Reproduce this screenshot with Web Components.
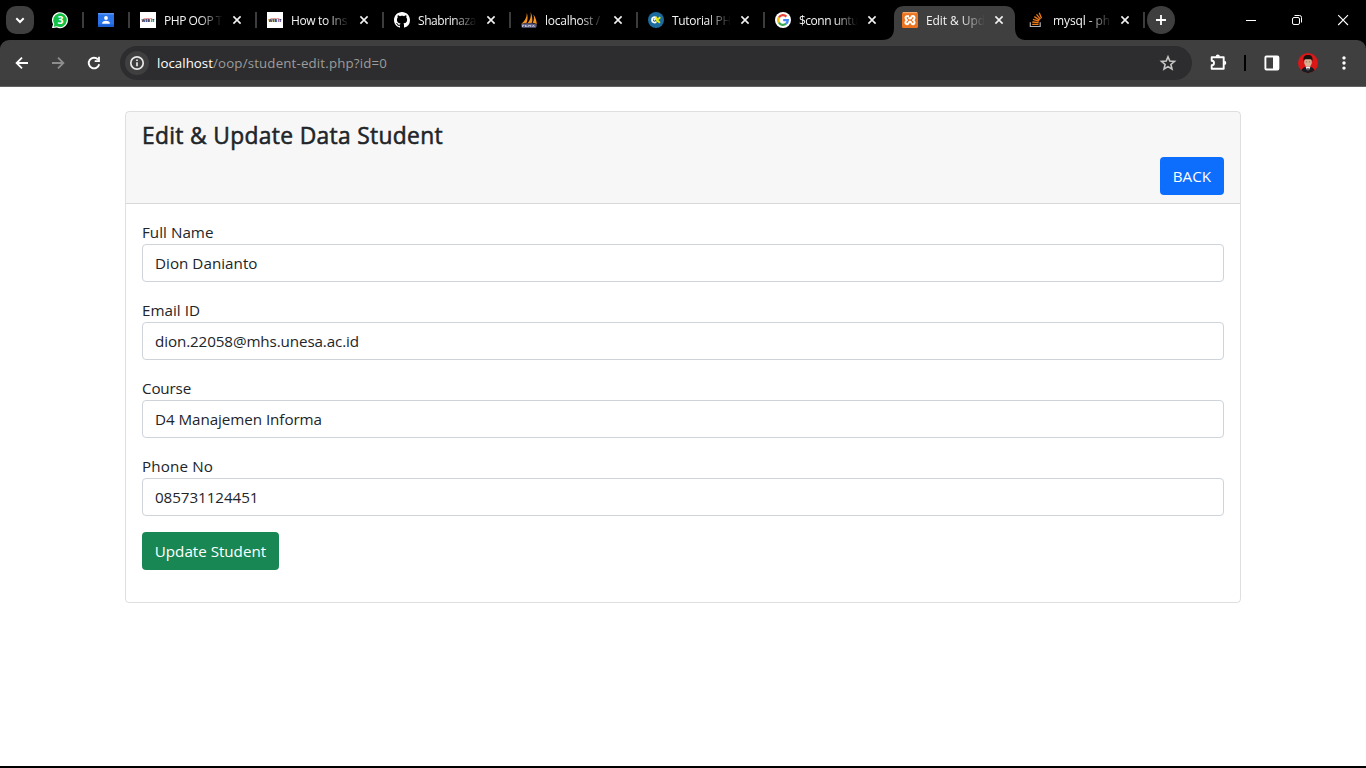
<!DOCTYPE html>
<html lang="en">
<head>
<meta charset="utf-8">
<title>Edit &amp; Update Data Student</title>
<style>
html,body{margin:0;height:100%;overflow:hidden;background:#fff}
body{font-family:"Open Sans","Noto Sans",sans-serif}
</style>
</head>
<body>
<browser-window>
  <tab-strip slot="tabs"></tab-strip>
  <tool-bar slot="toolbar"></tool-bar>
  <student-card>
    <fit-text slot="title" w="301">Edit &amp; Update Data Student</fit-text>
    <action-button slot="action" color="#0d6efd"><fit-text w="38.5">BACK</fit-text></action-button>
    <form-field label="Full Name" lw="71.500" value="Dion Danianto" vw="102.5"></form-field>
    <form-field label="Email ID" lw="58" value="dion.22058@mhs.unesa.ac.id" vw="204"></form-field>
    <form-field label="Course" lw="49" value="D4 Manajemen Informa" vw="167"></form-field>
    <form-field label="Phone No" lw="71" value="085731124451" vw="103.5"></form-field>
    <action-button color="#198754"><fit-text w="111.3">Update Student</fit-text></action-button>
  </student-card>
</browser-window>
<script>
const ICONS = {
  chevron: '<path d="M6.3 6.3 10 10l3.700-3.700" transform="translate(0 2)" fill="none" stroke="#fff" stroke-width="2"/>',
  whatsapp: '<path d="M2.700 17.500 3.700 14.100A7.400 7.400 0 1 1 6.700 16.800Z" fill="#12c143" stroke="#fff" stroke-width="1.200" stroke-linejoin="round"/><text x="10.400" y="13.800" text-anchor="middle" font-family="Open Sans" font-weight="700" font-size="10.500" fill="#fff">3</text>',
  contacts: '<rect x="2" y="3" width="16" height="14" rx="1.200" fill="#2a73e8"/><path d="M2 14.500h16V16a1 1 0 0 1-1 1H3a1 1 0 0 1-1-1Z" fill="#1a5fd0"/><rect x="2" y="3" width="16" height="1.500" rx=".7" fill="#5a97f5"/><circle cx="10" cy="8" r="1.900" fill="#fff"/><path d="M6.200 13.800v-1c0-1.400 2.500-2.100 3.800-2.100s3.800.7 3.800 2.100v1Z" fill="#fff"/>',
  webit: '<rect x="2" y="2" width="16" height="16" fill="#fff"/><text x="10" y="8.800" text-anchor="middle" font-family="Open Sans" font-weight="700" font-size="2.400" fill="#e0555c" textLength="9">FUNDA OF</text><text x="10" y="11.900" text-anchor="middle" font-family="Open Sans" font-weight="800" font-size="3.700" fill="#1c2340" textLength="13" lengthAdjust="spacingAndGlyphs">WEB IT</text>',
  github: '<path transform="translate(2 2)" fill="#fff" d="M8 0C3.580 0 0 3.580 0 8c0 3.540 2.290 6.530 5.470 7.590.4.070.55-.17.55-.38 0-.19-.01-.82-.01-1.490-2.010.37-2.530-.49-2.690-.94-.09-.23-.48-.94-.82-1.130-.28-.15-.68-.52-.01-.53.63-.01 1.080.58 1.230.82.72 1.210 1.870.87 2.330.66.070-.52.28-.87.51-1.070-1.780-.2-3.640-.89-3.640-3.950 0-.87.31-1.590.82-2.150-.08-.2-.36-1.020.08-2.120 0 0 .67-.21 2.200.82.64-.18 1.320-.27 2-.27s1.360.09 2 .27c1.530-1.040 2.200-.82 2.200-.82.44 1.100.16 1.920.08 2.120.51.56.82 1.270.82 2.150 0 3.070-1.870 3.750-3.650 3.950.29.25.54.73.54 1.480 0 1.070-.01 1.930-.01 2.200 0 .21.15.46.55.38A8.010 8.010 0 0 0 16 8c0-4.420-3.580-8-8-8Z"/>',
  pma: '<path d="M7.800 3C8 7 6 11 2.300 14l5.400-1.200C9 9 8.800 5.500 7.800 3ZM11.500 2c1 4-.2 8-3 11.200l4.600-.5c.6-3.700.1-7.500-1.600-10.700ZM14.400 4.500c.9 3 .7 5.500-.6 8.300l4 1.200c-.2-3.500-1.400-7-3.400-9.500Z" fill="#f59324"/><path d="M2.200 14.200c4-1.300 10.500-1.500 15.800.3l-1 3.300H2.800Z" fill="#5d5f86"/><path d="M3.500 17v-1.800h1.300v1M6.500 15v2M6.500 16h1.600v1M9.700 17v-2l1 1 1-1v2M13.500 17l.9-2 1 2" stroke="#d0d1e0" stroke-width=".8" fill="none"/>',
  tutorial: '<circle cx="10" cy="10" r="8" fill="#1d6b9d"/><path d="M10.300 12c-1.900 1.200-4.300.2-4.300-2s2-3.400 3.600-2.600M8 10.300l2.600-3.200" fill="none" stroke="#fff" stroke-width="1.800"/><path d="M10 6.800l1.400 5.200M14.300 7.200 11 10l2.900 2.900" fill="none" stroke="#e8ec1c" stroke-width="1.800"/>',
  google: '<circle cx="10" cy="10" r="8" fill="#fff"/><g fill="none" stroke-width="2.300"><path d="M13.400 6.600A4.800 4.800 0 0 0 5.900 7.500" stroke="#ea4335"/><path d="M5.900 7.500a4.800 4.800 0 0 0 0 5" stroke="#fbbc05"/><path d="M5.900 12.500a4.800 4.800 0 0 0 7.200 1.200" stroke="#34a853"/><path d="M10.200 10.200h4.600a4.800 4.800 0 0 1-1.700 3.500" stroke="#4285f4"/></g>',
  xampp: '<rect x="2" y="2" width="16" height="16" rx="1.500" fill="#ec7320"/><path d="M3 2.700h14" stroke="#f7b27b"/><path d="M9 6.300H6.800a1.500 1.500 0 0 0-1.300 1.500q0 1.600 1.500 2.300-1.500.7-1.500 2.300a1.600 1.600 0 0 0 3.200.3Q10 10.500 11.300 12.700a1.600 1.600 0 0 0 3.200-.3q0-1.600-1.500-2.300 1.500-.7 1.500-2.300a1.600 1.600 0 0 0-3.200-.3Q10 9.700 8.700 7.500" fill="none" stroke="#fff" stroke-width="2" stroke-linejoin="round"/>',
  stack: '<path d="M3.300 12.300v4.200h9.900v-4.200" fill="none" stroke="#aeb2b7" stroke-width="1.200"/><g stroke="#f07c18" stroke-width="1.300"><path d="M5.200 14.400h6.300M5.300 12l6.300.7M5.900 9.300l6 1.900M7.300 6.600l5.300 3.500M9.500 4.300l4 4.900M12.200 2.700l2.300 5.500"/></g>',
  close: '<path d="m6.400 6.400 7.200 7.200M13.600 6.400l-7.200 7.200" stroke="#f2f2f2" stroke-width="1.600"/>',
  plus: '<path d="M10 5v10M5 10h10" stroke="#fff" stroke-width="1.800"/>',
  min: '<path d="M5 10.500h10" stroke="#fff"/>',
  restore: '<g fill="none" stroke="#fff"><rect x="5.500" y="7.500" width="7" height="7" rx="1.500"/><path d="M7.500 5.500h5a2 2 0 0 1 2 2v5"/></g>',
  winclose: '<path d="m5.200 5.200 9.800 9.800M15 5.200 5.200 15" stroke="#fff" stroke-width="1.100"/>',
  back: '<path d="M16 10H5M10 4.600 4.600 10l5.400 5.400" fill="none" stroke="#fff" stroke-width="1.800"/>',
  forward: '<path d="M4 10h11M10 4.600l5.400 5.400-5.400 5.400" fill="none" stroke="#8d8d8d" stroke-width="1.800"/>',
  reload: '<path d="M15.200 11.200A5.300 5.300 0 1 1 14 6.500" fill="none" stroke="#fff" stroke-width="1.900"/><path d="M15.900 3.700v5.200h-5.200v-1.700h3.400V3.700Z" fill="#fff"/>',
  info: '<circle cx="10" cy="10" r="6.200" fill="none" stroke="#e8e8e8" stroke-width="1.700"/><path d="M10 9.200v4.100M10 6.400v1.700" stroke="#e8e8e8" stroke-width="1.700"/>',
  star: '<path d="m10 3.700 1.800 4.300 4.700.4-3.600 3.100 1.100 4.600-4-2.500-4 2.500 1.100-4.600-3.600-3.100 4.700-.4Z" fill="none" stroke="#c7c7c7" stroke-width="1.600"/>',
  puzzle: '<path d="M3.700 4.200h12v11.600h-12v-3.500a2.300 2.300 0 0 0 0-4.600Z" fill="none" stroke="#fff" stroke-width="1.900" stroke-linejoin="round"/><path d="M7.700 3.700a2.100 2.100 0 0 1 4.200 0ZM16.200 7.800a2.100 2.100 0 0 1 0 4.200Z" fill="#fff"/>',
  panel: '<rect x="3.400" y="3.500" width="13" height="13" rx="1" fill="none" stroke="#fff" stroke-width="1.900"/><path d="M11 4h5.500v12.500H11Z" fill="#fff"/>',
  avatar: '<clipPath id="c"><circle cx="10" cy="10" r="10"/></clipPath><g clip-path="url(#c)"><path d="M0 0h20v20H0Z" fill="#dc1717"/><path d="M3 20c0-4 2-5.300 5-6.200h4c3 .9 5 2.200 5 6.200Z" fill="#191a20"/><path d="m7.500 13.500 2.500 6 2.500-6Z" fill="#f4f4f4"/><path d="m9.500 15-.6 5h2.200l-.6-5Z" fill="#15151a"/><ellipse cx="10" cy="9" rx="3.800" ry="4.900" fill="#d9b091"/><path d="M5.700 8.600C4.600 3.900 6.800 2 10 2s5.400 1.900 4.300 6.600L13.500 6.600C11.500 6 8.500 6 6.500 6.600Z" fill="#16120f"/><path d="M7.800 8.900h1.300M10.900 8.900h1.300" stroke="#6b4a38" stroke-width=".7"/></g>',
  dots: '<g fill="#fff"><circle cx="10" cy="4.900" r="1.700"/><circle cx="10" cy="10" r="1.700"/><circle cx="10" cy="15.100" r="1.700"/></g>'
};

class Base extends HTMLElement {
  constructor(){ super(); this.attachShadow({mode:'open'}); }
  connectedCallback(){ this.shadowRoot.innerHTML = this.render(); this.ready(); }
  ready(){}
}

customElements.define('ui-icon', class extends Base {
  render(){
    return `<style>:host{display:block;flex:none;width:20px;height:20px}svg{display:block}</style>
      <svg width="20" height="20" viewBox="0 0 20 20">${ICONS[this.getAttribute('name')]}</svg>`;
  }
});

customElements.define('browser-window', class extends Base {
  render(){
    return `<style>
      :host{display:flex;flex-direction:column;height:768px;background:#000}
      main{flex:1;background:#fff;margin-bottom:2px;padding-top:24px;box-sizing:border-box}
      </style><slot name="tabs"></slot><slot name="toolbar"></slot><main><slot></slot></main>`;
  }
});

customElements.define('browser-tab', class extends Base {
  render(){
    return `<style>
      :host{display:flex;flex:none;width:127px;height:40px;align-items:center;position:relative;box-sizing:border-box;padding-left:10px}
      :host::before{content:"";position:absolute;left:0;top:12px;width:2px;height:16px;background:#3c3c3c}
      :host([active])::before,:host([nosep])::before{display:none}
      .bg{display:none;position:absolute;left:-8px;top:6px}
      :host([active]) .bg{display:block}
      ui-icon{position:relative}
      .t{position:relative;margin-left:6px;width:60px;padding-top:1px;font-size:12px;line-height:20px;color:#f4f4f4;
        -webkit-mask-image:linear-gradient(90deg,#000 58%,transparent 98%);mask-image:linear-gradient(90deg,#000 58%,transparent 98%)}
      .x{margin-left:3px}
      :host([nosep]) .x{margin-left:2px}
      </style>
      <svg class="bg" width="145" height="34" viewBox="0 0 145 34"><path d="M0 34c8 0 12-4 12-12V10C12 4 16 0 22 0h101c6 0 10 4 10 10v12c0 8 4 12 12 12Z" fill="#3f3f3f"/></svg>
      <ui-icon name="${this.getAttribute('icon')}"></ui-icon>
      <div class="t"><fit-text w="${this.getAttribute('w')}">${this.getAttribute('label').replace('&','&amp;')}</fit-text></div>
      <ui-icon class="x" name="close"></ui-icon>`;
  }
});

customElements.define('tab-strip', class extends Base {
  render(){
    return `<style>
      :host{display:flex;height:40px;align-items:center;background:#000;color:#fff}
      .round{display:grid;place-items:center;width:28px;height:28px;background:#3f3f3f;flex:none}
      .search{border-radius:10px;margin-left:6px}
      .wa{margin-left:16px}.ct{margin-left:12px}
      .sep{width:2px;height:16px;background:#3c3c3c;margin-left:12px;flex:none}
      .tabs{display:flex;margin-left:12px}
      .new{border-radius:50%;margin-left:2px}
      .win{display:flex;gap:26px;margin-left:auto;margin-right:13px}
      </style>
      <div class="round search"><ui-icon name="chevron"></ui-icon></div>
      <ui-icon class="wa" name="whatsapp"></ui-icon><i class="sep"></i>
      <ui-icon class="ct" name="contacts"></ui-icon>
      <div class="tabs">
        <browser-tab icon="webit" label="PHP OOP T" w="58"></browser-tab>
        <browser-tab icon="webit" label="How to Ins" w="56"></browser-tab>
        <browser-tab icon="github" label="Shabrinaza" w="58"></browser-tab>
        <browser-tab icon="pma" label="localhost /" w="55"></browser-tab>
        <browser-tab icon="tutorial" label="Tutorial PH" w="59"></browser-tab>
        <browser-tab icon="google" label="$conn untu" w="59"></browser-tab>
        <browser-tab icon="xampp" label="Edit &amp; Upd" w="59" active></browser-tab>
        <browser-tab icon="stack" label="mysql - ph" w="57" nosep></browser-tab>
      </div>
      <i class="sep" style="margin-left:-1px"></i>
      <div class="round new"><ui-icon name="plus"></ui-icon></div>
      <div class="win"><ui-icon name="min"></ui-icon><ui-icon name="restore"></ui-icon><ui-icon name="winclose"></ui-icon></div>`;
  }
});

customElements.define('tool-bar', class extends Base {
  render(){
    return `<style>
      :host{display:flex;height:47px;box-sizing:border-box;align-items:center;background:#3f3f3f;border-bottom:1px solid #626262;border-radius:9px 9px 0 0;padding-left:12px}
      .nav{display:flex;gap:16px}
      .url{display:flex;align-items:center;box-sizing:border-box;width:1072px;height:34px;border-radius:17px;background:#2d2d2f;margin-left:16px;padding:0 14px 0 5px;font-size:13.300px;color:#9c9c9c}
      .site{display:grid;place-items:center;width:24px;height:24px;border-radius:50%;background:#3f3f3f;margin-right:8px}
      b{font-weight:400;color:#fff}
      .star{margin-left:auto}
      .ext{margin-left:16px}
      .bar{width:2px;height:16px;background:#000;margin:0 16px}
      .av{margin:0 16px}
      </style>
      <div class="nav"><ui-icon name="back"></ui-icon><ui-icon name="forward"></ui-icon><ui-icon name="reload"></ui-icon></div>
      <div class="url"><div class="site"><ui-icon name="info"></ui-icon></div><b><fit-text w="56">localhost</fit-text></b><fit-text w="174">/oop/student-edit.php?id=0</fit-text><ui-icon class="star" name="star"></ui-icon></div>
      <ui-icon class="ext" name="puzzle"></ui-icon><i class="bar"></i><ui-icon name="panel"></ui-icon><ui-icon class="av" name="avatar"></ui-icon><ui-icon name="dots"></ui-icon>`;
  }
});

customElements.define('student-card', class extends Base {
  render(){
    return `<style>
      :host{display:block;width:1116px;box-sizing:border-box;margin:0 auto;border:1px solid rgba(0,0,0,.125);border-radius:4px;color:#212529;font-size:15.200px;line-height:24px}
      header{padding:8px 16px;background:rgba(0,0,0,.03);border-bottom:1px solid rgba(0,0,0,.125);border-radius:3px 3px 0 0}
      h4{margin:0 0 8px;font-size:22.800px;line-height:32px;height:28.800px;font-weight:400;-webkit-text-stroke:.55px #212529}
      .row{display:flex;justify-content:flex-end}
      section{padding:16px 16px 32px}
      </style>
      <header><h4><slot name="title"></slot></h4><div class="row"><slot name="action"></slot></div></header>
      <section><slot></slot></section>`;
  }
});

customElements.define('form-field', class extends Base {
  render(){
    const a = n => this.getAttribute(n);
    return `<style>
      :host{display:block;margin-bottom:16px}
      label{display:block;height:24px}
      .in{height:38px;box-sizing:border-box;border:1px solid #ced4da;border-radius:4px;padding:6px 12px;background:#fff}
      </style>
      <label><fit-text w="${a('lw')}">${a('label')}</fit-text></label>
      <div class="in" role="textbox"><fit-text w="${a('vw')}">${a('value')}</fit-text></div>`;
  }
});

customElements.define('action-button', class extends Base {
  render(){
    return `<style>
      :host{display:block;width:fit-content;height:38px;box-sizing:border-box;padding:7px 12.800px;border-radius:4px;color:#fff;background:${this.getAttribute('color')}}
      </style><slot></slot>`;
  }
});

/* Text whose tracking is tuned so that the line has the advance width given in w.
   Defined last: it measures itself with the inherited font of its finished host. */
customElements.define('fit-text', class extends Base {
  render(){ return `<style>:host{display:inline-block;white-space:pre}span{display:inline-block}</style><span><slot></slot></span>`; }
  ready(){
    const w = +this.getAttribute('w'), n = this.textContent.length;
    if (w && n) this.style.letterSpacing = ((w - this.shadowRoot.querySelector('span').getBoundingClientRect().width) / n).toFixed(3) + 'px';
  }
});
</script>
</body>
</html>
